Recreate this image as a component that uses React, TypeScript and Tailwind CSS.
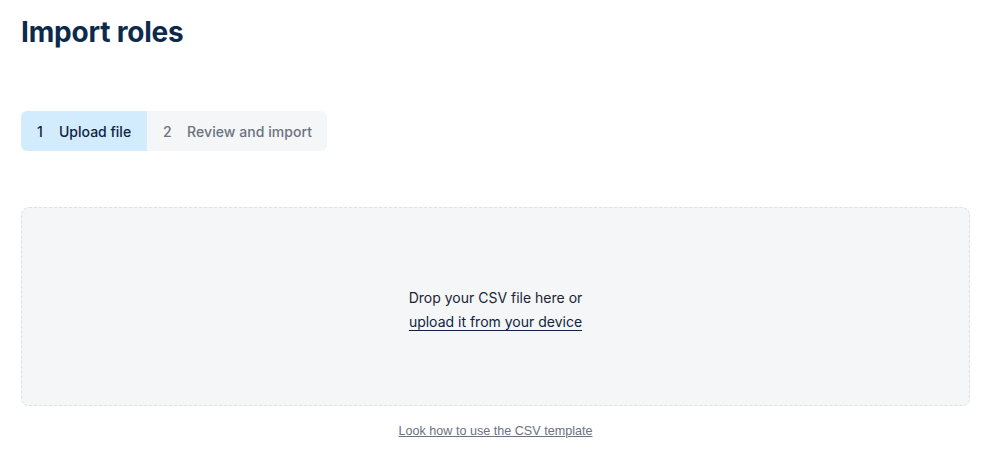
export default function App() {
  return (
    <div
      className="min-h-screen bg-white pl-[21px] pr-[36px] pt-[14px]"
      style={{ fontFamily: "Inter, 'Noto Sans', sans-serif" }}
    >
      <h1 className="text-[28px] leading-[36px] font-bold text-[#0c2a4b] tracking-[-0.2px]">
        Import roles
      </h1>

      <div className="mt-[61px] flex">
        <div className="flex h-[40px] overflow-hidden rounded-[6px] text-[14px] font-medium">
          <div className="flex items-center bg-[#d3ecfd] pl-[16px] pr-[16px] text-[#0f2440]">
            <span className="w-[22px]">1</span>
            <span>Upload file</span>
          </div>
          <div className="flex items-center bg-[#f5f6f8] pl-[16px] pr-[15px] text-[#6b7280]">
            <span className="w-[24px]">2</span>
            <span className="tracking-[0.05px]">Review and import</span>
          </div>
        </div>
      </div>

      <div className="mt-[56px] flex h-[199px] flex-col items-center justify-center rounded-[8px] border border-dashed border-[#dde0e5] bg-[#f5f6f8] pt-[6px] text-[14px] leading-[24px] text-[#1a2433]">
        <p>Drop your CSV file here or</p>
        <a href="#" className="text-[#0f2440] underline underline-offset-[3px]">
          upload it from your device
        </a>
      </div>

      <div className="mt-[17px] flex justify-center">
        <a
          href="#"
          className="text-[12.6px] leading-[16px] text-[#6b7280] underline"
          style={{ fontFamily: "'Liberation Sans', Arial, sans-serif" }}
        >
          Look how to use the CSV template
        </a>
      </div>
    </div>
  );
}
